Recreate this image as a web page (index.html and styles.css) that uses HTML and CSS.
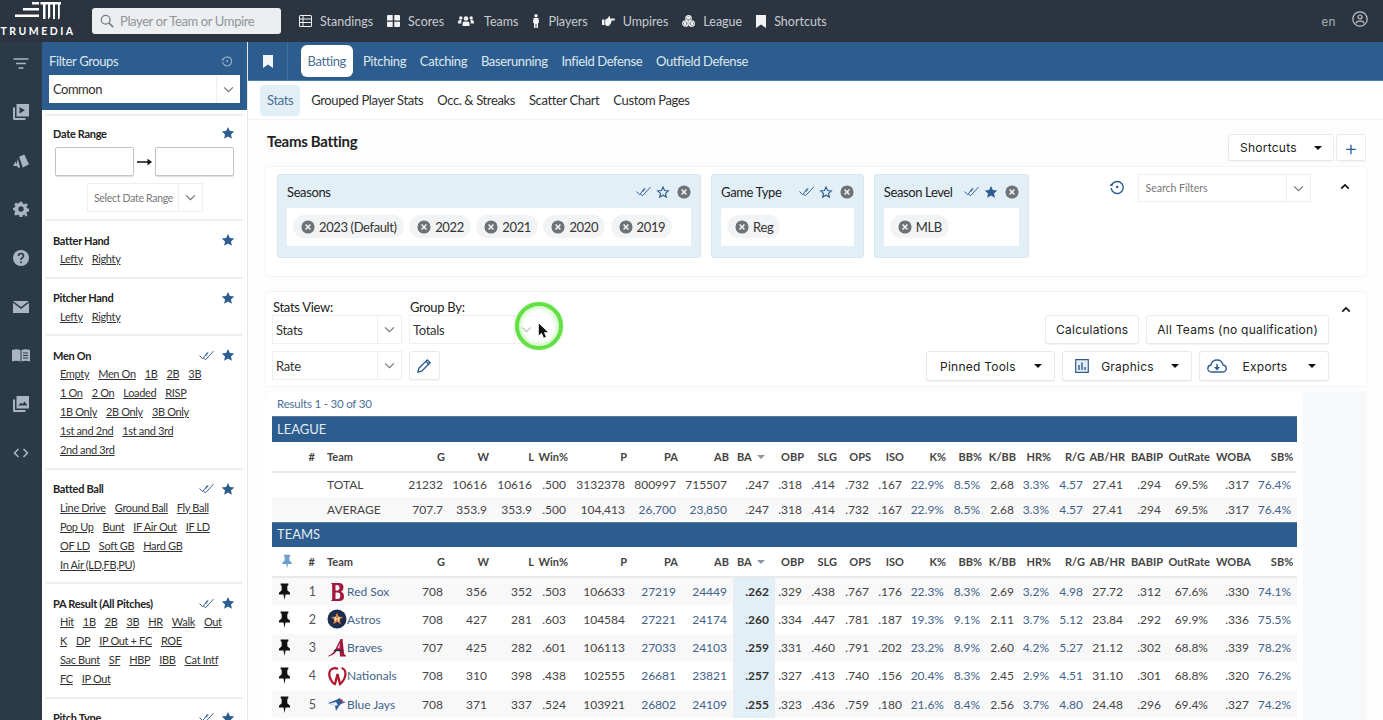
FILE: index.html
```html
<!DOCTYPE html>
<html lang="en">
<head>
<meta charset="utf-8">
<title>Teams Batting</title>
<link rel="stylesheet" href="styles.css">
</head>
<body>
<svg class="sprite" width="0" height="0" aria-hidden="true">
  <symbol id="i-chev" viewBox="0 0 12 8"><path d="M1 1.500 6 6.500 11 1.500" fill="none" stroke="currentColor" stroke-width="1.400"/></symbol>
  <symbol id="i-star" viewBox="0 0 24 24"><path d="M12 1.500l3.200 7 7.600.8-5.700 5.100 1.600 7.500L12 18.100l-6.700 3.800 1.600-7.500L1.200 9.300l7.600-.8z" fill="currentColor"/></symbol>
  <symbol id="i-staro" viewBox="0 0 24 24"><path d="M12 3.500l2.700 5.900 6.400.7-4.800 4.300 1.400 6.300L12 17.500l-5.700 3.200 1.400-6.300-4.800-4.300 6.400-.7z" fill="none" stroke="currentColor" stroke-width="2"/></symbol>
  <symbol id="i-x" viewBox="0 0 16 16"><circle cx="8" cy="8" r="7.500" fill="currentColor"/><path d="M5.200 5.200l5.600 5.600M10.800 5.200l-5.600 5.600" stroke="#f2f2f2" stroke-width="1.800"/></symbol>
  <symbol id="i-check" viewBox="0 0 16 11"><path d="M.5 5.500 4 9 9 2M4.500 8 7 10 15.500 .8M7 6 10 2.500" fill="none" stroke="currentColor" stroke-width="1"/></symbol>
  <symbol id="i-hist" viewBox="0 0 16 16"><path d="M3 5.500A6 6 0 1 1 2.200 9" fill="none" stroke="currentColor" stroke-width="1.400"/><path d="M.3 6.500 3.600 7.200 4 3.600z" fill="currentColor"/><circle cx="8.200" cy="8" r="1.300" fill="currentColor"/></symbol>
  <symbol id="i-caretup" viewBox="0 0 12 8"><path d="M1.500 6.500 6 2l4.500 4.500" fill="none" stroke="currentColor" stroke-width="2"/></symbol>
  <symbol id="i-pin" viewBox="0 0 14 20"><path d="M2.500 .5h9v2L10.300 3.500v5l3.200 3V13.500H8.200L7 20l-1.200-6.500H.5v-2l3.200-3v-5L2.500 2.500z" fill="currentColor"/></symbol>
</svg>

<div class="app">
  <header class="top">
    <div class="logo">
      <svg class="logo-mark" viewBox="0 0 46 18" aria-hidden="true">
        <path d="M17 0h7v2.500h-7zM8 6h16v2.500H8zM0 12.500h24V15H0z" fill="#fff"/>
        <path d="M25.500 0H46v2.500H44.800V15.500Q44.800 17 43 17.500V2.500H40V17h-2V2.500h-2.800V15L33 17.500V2.500H30.500V17H28V2.500H25.500z" fill="#fff"/>
      </svg>
      <span class="logo-text">TRUMEDIA</span>
    </div>
    <div class="search">
      <svg class="search-ic" viewBox="0 0 16 16"><circle cx="6.500" cy="6.500" r="5" fill="none" stroke="currentColor" stroke-width="1.500"/><path d="M10.200 10.200 15 15" stroke="currentColor" stroke-width="1.800"/></svg>
      <span>Player or Team or Umpire</span>
    </div>
    <nav class="nav">
      <a class="nav-item"><svg class="ni" viewBox="0 0 13 12"><path fill="currentColor" d="M0 1.500Q0 0 1.500 0h10Q13 0 13 1.500v9q0 1.500-1.500 1.500h-10Q0 12 0 10.500zM1 1v2.500h2.500V1zm3.500 0v2.500H12V1zM1 4.500V7h2.500V4.500zm3.500 0V7H12V4.500zM1 8v3h2.500V8zm3.500 0v3H12V8z"/></svg>Standings</a>
      <a class="nav-item"><svg class="ni" viewBox="0 0 13 12"><path fill="currentColor" d="M0 1Q0 0 1 0h4.700v5.500H0zM7.300 0H12q1 0 1 1v4.500H7.300zM0 6.800h5.700V12H1q-1 0-1-1zM7.300 6.800H13V11q0 1-1 1H7.300z"/></svg>Scores</a>
      <a class="nav-item"><svg class="ni ni-w" viewBox="0 0 16 12"><g fill="currentColor"><circle cx="8" cy="3.500" r="2.300"/><path d="M4.500 11V8.500Q4.500 6.500 6.500 6.500h3q2 0 2 2V11z"/><circle cx="2.800" cy="3" r="1.700"/><path d="M0 8.500V7q0-2 2-2h1.500Q3.300 6 3.300 8.500z"/><circle cx="13.200" cy="3" r="1.700"/><path d="M16 8.500V7q0-2-2-2h-1.500q.2 1 .2 3.500z"/></g></svg>Teams</a>
      <a class="nav-item"><svg class="ni ni-n" viewBox="0 0 6 14"><g fill="currentColor"><circle cx="3" cy="1.700" r="1.700"/><path d="M.5 4h5L6 9H5v5H3.400V10h-.8v4H1V9H0z"/></g></svg>Players</a>
      <a class="nav-item"><svg class="ni" viewBox="0 0 13 10"><path fill="currentColor" d="M0 3.500h2.500V9H0zM3.200 3.800 6 2 7 0q1.500.3 1 2.500h4Q13 2.500 13 3.500T12 4.500H9.500q.5 1.500-.5 2 .3 1.500-1 2Q7.500 10 6 10H5L3.200 9z"/></svg>Umpires</a>
      <a class="nav-item"><svg class="ni" viewBox="0 0 13 12"><g fill="none" stroke="currentColor" stroke-width="1.300"><circle cx="6.500" cy="3.400" r="2.700"/><circle cx="3.400" cy="8.500" r="2.700"/><circle cx="9.600" cy="8.500" r="2.700"/></g><path fill="currentColor" d="M5 1.500h3v3H5zM2 7h2.500v3H2zM8.500 7H11v3H8.500z"/></svg>League</a>
      <a class="nav-item"><svg class="ni ni-b" viewBox="0 0 10 13"><path fill="currentColor" d="M0 0h10v13L5 9.500 0 13z"/></svg>Shortcuts</a>
    </nav>
    <div class="top-right">
      <span class="lang">en</span>
      <svg class="user" viewBox="0 0 16 16"><g fill="none" stroke="currentColor" stroke-width="1.200"><circle cx="8" cy="8" r="7.200"/><circle cx="8" cy="6" r="2"/><path d="M3.800 12.500Q4.500 10.200 6.500 10.200h3q2 0 2.700 2.300"/></g></svg>
    </div>
  </header>

  <div class="body">
    <aside class="rail">
      <svg class="ri" viewBox="0 0 16 12"><path d="M.5 1h15M3 5.500h10M5.500 10h5" stroke="currentColor" stroke-width="1.700" fill="none"/></svg>
      <svg class="ri" viewBox="0 0 16 16"><path fill="currentColor" d="M3.500 0H16v12.500H3.500zM6.500 3v6.500L12 6.200zM0 3.500h2V14h10.500v2H1.500Q0 16 0 14.500z" fill-rule="evenodd"/></svg>
      <svg class="ri" viewBox="0 0 17 15"><path fill="currentColor" d="M6.500 3 12 .5 17 11l-6.500 3.500zM5 5.500 7.500 14 6 15 3.500 12zM3 8l1 5-4-.5z"/></svg>
      <svg class="ri" viewBox="0 0 24 24"><path fill="currentColor" fill-rule="evenodd" d="M10 1h4l.6 3 2.400 1 2.600-1.700 2.800 2.800L20 8.700l1 2.300 3 .6v4l-3 .4-1 2.500 1.700 2.500-2.800 2.800L17 20.400l-2.400 1L14 24h-4l-.6-2.700-2.400-1L4.400 22 1.600 19.200 3.400 16.600l-1-2.500L0 13.500v-3l2.600-.6 1-2.300L1.900 5.100l2.800-2.800L7 4l2.400-1zM12 8a4 4 0 1 0 0 8 4 4 0 0 0 0-8z"/></svg>
      <svg class="ri" viewBox="0 0 16 16"><circle cx="8" cy="8" r="8" fill="currentColor"/><path d="M5.500 6Q5.500 3.500 8 3.500T10.500 6Q10.500 7.300 9 8 8 8.500 8 10" fill="none" stroke="#2b3a48" stroke-width="1.600"/><circle cx="8" cy="12.200" r="1" fill="#2b3a48"/></svg>
      <svg class="ri" viewBox="0 0 16 12"><path fill="currentColor" d="M0 0h16L8 6zM0 1.800 8 8l8-6.200V12H0z"/></svg>
      <svg class="ri ri-wide" viewBox="0 0 18 13"><path fill="currentColor" fill-rule="evenodd" d="M0 1.500Q4 0 8.500 1.500V13Q4 11.500 0 13zM9.500 1.500Q14 0 18 1.500V13Q14 11.500 9.500 13zM11 4v1h5V4zm0 2.500v1h5v-1zm0 2.500v1h5V9z"/></svg>
      <svg class="ri" viewBox="0 0 16 16"><path fill="currentColor" fill-rule="evenodd" d="M3.500 0H16v12.500H3.500zM5 9.500h9.500L11.500 5.500 9.500 8 8 6.800zM0 3.500h2V14h10.500v2H1.500Q0 16 0 14.500z"/></svg>
      <svg class="ri" viewBox="0 0 16 10"><path d="M5.500 1 1.500 5l4 4M10.500 1l4 4-4 4" fill="none" stroke="currentColor" stroke-width="1.600"/></svg>
    </aside>

    <aside class="filters">
      <div class="fg">
        <div class="fg-head"><span>Filter Groups</span><svg class="fg-hist"><use href="#i-hist"/></svg></div>
        <div class="sel sel-fg"><span class="sel-t">Common</span><span class="sel-c"><svg class="chev"><use href="#i-chev"/></svg></span></div>
      </div>
      <div class="flist">
        <section class="fs fs-date">
          <div class="fs-h"><b>Date Range</b><svg class="star"><use href="#i-star"/></svg></div>
          <div class="dates"><span class="date"></span><svg class="arrow" viewBox="0 0 15 8"><path d="M0 4h12" stroke="#111" stroke-width="1.500"/><path d="M10.500 0.800 15 4l-4.500 3.200z" fill="#111"/></svg><span class="date"></span></div>
          <div class="sel sel-date"><span class="sel-t">Select Date Range</span><span class="sel-c"><svg class="chev"><use href="#i-chev"/></svg></span></div>
        </section>
        <section class="fs">
          <div class="fs-h"><b>Batter Hand</b><svg class="star"><use href="#i-star"/></svg></div>
          <div class="links"><a>Lefty</a><a>Righty</a></div>
        </section>
        <section class="fs">
          <div class="fs-h"><b>Pitcher Hand</b><svg class="star"><use href="#i-star"/></svg></div>
          <div class="links"><a>Lefty</a><a>Righty</a></div>
        </section>
        <section class="fs">
          <div class="fs-h"><b>Men On</b><svg class="dbl"><use href="#i-check"/></svg><svg class="star"><use href="#i-star"/></svg></div>
          <div class="links"><a>Empty</a><a>Men On</a><a>1B</a><a>2B</a><a>3B</a><br><a>1 On</a><a>2 On</a><a>Loaded</a><a>RISP</a><br><a>1B Only</a><a>2B Only</a><a>3B Only</a><br><a>1st and 2nd</a><a>1st and 3rd</a><br><a>2nd and 3rd</a></div>
        </section>
        <section class="fs">
          <div class="fs-h"><b>Batted Ball</b><svg class="dbl"><use href="#i-check"/></svg><svg class="star"><use href="#i-star"/></svg></div>
          <div class="links"><a>Line Drive</a><a>Ground Ball</a><a>Fly Ball</a><br><a>Pop Up</a><a>Bunt</a><a>IF Air Out</a><a>IF LD</a><br><a>OF LD</a><a>Soft GB</a><a>Hard GB</a><br><a>In Air (LD,FB,PU)</a></div>
        </section>
        <section class="fs">
          <div class="fs-h"><b>PA Result (All Pitches)</b><svg class="dbl"><use href="#i-check"/></svg><svg class="star"><use href="#i-star"/></svg></div>
          <div class="links"><a>Hit</a><a>1B</a><a>2B</a><a>3B</a><a>HR</a><a>Walk</a><a>Out</a><br><a>K</a><a>DP</a><a>IP Out + FC</a><a>ROE</a><br><a>Sac Bunt</a><a>SF</a><a>HBP</a><a>IBB</a><a>Cat Intf</a><br><a>FC</a><a>IP Out</a></div>
        </section>
        <section class="fs">
          <div class="fs-h"><b>Pitch Type</b><svg class="dbl"><use href="#i-check"/></svg><svg class="star"><use href="#i-star"/></svg></div>
        </section>
      </div>
    </aside>

    <main class="main">
      <div class="tabs">
        <span class="tab-mark"><svg viewBox="0 0 10 13"><path fill="currentColor" d="M0 0h10v13L5 9.500 0 13z"/></svg></span>
        <a class="tab tab-on">Batting</a><a class="tab">Pitching</a><a class="tab">Catching</a><a class="tab">Baserunning</a><a class="tab">Infield Defense</a><a class="tab">Outfield Defense</a>
      </div>
      <div class="subtabs">
        <a class="sub sub-on">Stats</a><a class="sub">Grouped Player Stats</a><a class="sub">Occ. &amp; Streaks</a><a class="sub">Scatter Chart</a><a class="sub">Custom Pages</a>
      </div>
      <div class="content">
        <div class="title-row">
          <h1>Teams Batting</h1>
          <div class="sc-group">
            <button class="btn btn-sc">Shortcuts<i class="caret"></i></button>
            <button class="btn btn-plus">+</button>
          </div>
        </div>

        <div class="panel panel-f">
          <div class="fcard fcard-s">
            <div class="fcard-h"><span>Seasons</span><svg class="dbl"><use href="#i-check"/></svg><svg class="staro"><use href="#i-staro"/></svg><svg class="xc"><use href="#i-x"/></svg></div>
            <div class="fcard-b">
              <span class="chip"><svg class="xc"><use href="#i-x"/></svg>2023 (Default)</span>
              <span class="chip"><svg class="xc"><use href="#i-x"/></svg>2022</span>
              <span class="chip"><svg class="xc"><use href="#i-x"/></svg>2021</span>
              <span class="chip"><svg class="xc"><use href="#i-x"/></svg>2020</span>
              <span class="chip"><svg class="xc"><use href="#i-x"/></svg>2019</span>
            </div>
          </div>
          <div class="fcard fcard-g">
            <div class="fcard-h"><span>Game Type</span><svg class="dbl"><use href="#i-check"/></svg><svg class="staro"><use href="#i-staro"/></svg><svg class="xc"><use href="#i-x"/></svg></div>
            <div class="fcard-b"><span class="chip"><svg class="xc"><use href="#i-x"/></svg>Reg</span></div>
          </div>
          <div class="fcard fcard-l">
            <div class="fcard-h"><span>Season Level</span><svg class="dbl"><use href="#i-check"/></svg><svg class="staro"><use href="#i-star"/></svg><svg class="xc"><use href="#i-x"/></svg></div>
            <div class="fcard-b"><span class="chip"><svg class="xc"><use href="#i-x"/></svg>MLB</span></div>
          </div>
          <svg class="hist"><use href="#i-hist"/></svg>
          <div class="sel sel-search"><span class="sel-t">Search Filters</span><span class="sel-c"><svg class="chev"><use href="#i-chev"/></svg></span></div>
          <span class="caret-col caret-col-f"><svg class="cup"><use href="#i-caretup"/></svg></span>
        </div>

        <div class="panel panel-s">
          <div class="views">
            <div class="view-col">
              <label>Stats View:</label>
              <div class="sel sel-v"><span class="sel-t">Stats</span><span class="sel-c"><svg class="chev"><use href="#i-chev"/></svg></span></div>
              <div class="sel sel-v"><span class="sel-t">Rate</span><span class="sel-c"><svg class="chev"><use href="#i-chev"/></svg></span></div>
            </div>
            <div class="view-col">
              <label>Group By:</label>
              <div class="sel sel-v"><span class="sel-t">Totals</span><span class="sel-c"><svg class="chev"><use href="#i-chev"/></svg></span></div>
              <button class="btn btn-pen"><svg viewBox="0 0 16 16"><path d="M2 11 11 2l3 3-9 9-4 1z" fill="none" stroke="#2c5d8e" stroke-width="1.500"/><path d="M9.500 3.500l3 3" stroke="#2c5d8e" stroke-width="1.500"/></svg></button>
            </div>
            <div class="spot"><svg class="cursor" viewBox="0 0 12 18"><path d="M1 0v14l3.500-3 2.500 6 2.500-1-2.500-5.500H12z" fill="#111"/></svg></div>
          </div>
          <div class="tools">
            <div class="tool-row">
              <button class="btn">Calculations</button>
              <button class="btn">All Teams (no qualification)</button>
            </div>
            <div class="tool-row">
              <button class="btn btn-t btn-pin">Pinned Tools<i class="caret"></i></button>
              <button class="btn btn-t"><svg class="ti" viewBox="0 0 14 14"><path d="M.7.700h12.600v12.600H.7z" fill="#e6eef5" stroke="#2c5d8e" stroke-width="1.200"/><path d="M4 6v5M7 3.500V11M10 8v3" stroke="#2c5d8e" stroke-width="1.400"/></svg>Graphics<i class="caret"></i></button>
              <button class="btn btn-t"><svg class="ti ti-c" viewBox="0 0 20 14"><path d="M5 13Q.8 13 .8 9.500 .8 6.500 4 6 5 1 10 1t6 5q3.300.5 3.300 3.500 0 3.500-4.300 3.500z" fill="none" stroke="#2c5d8e" stroke-width="1.300"/><path d="M10 5v4.500" stroke="#2c5d8e" stroke-width="1.500"/><path d="M7 8h6l-3 3.500z" fill="#2c5d8e"/></svg>Exports<i class="caret"></i></button>
            </div>
          </div>
          <span class="caret-col caret-col-s"><svg class="cup"><use href="#i-caretup"/></svg></span>
        </div>

        <div class="results-wrap">
          <div class="results">
            <div class="res-count">Results 1 - 30 of 30</div>
            <table class="grid">
              <colgroup><col class="c25"><col class="c22"><col class="c86"><col class="c44"><col class="c44"><col class="c45"><col class="c34"><col class="c59"><col class="c51"><col class="c51"><col class="c42"><col class="c33"><col class="c33"><col class="c34"><col class="c33"><col class="c42"><col class="c36"><col class="c34"><col class="c35"><col class="c34"><col class="c40"><col class="c38"><col class="c47"><col class="c41"><col class="c42"></colgroup>
              <tbody>
                <tr class="band"><td colspan="25">LEAGUE</td></tr>
                <tr class="hd"><th></th><th>#</th><th class="l">Team</th><th>G</th><th>W</th><th>L</th><th>Win%</th><th>P</th><th>PA</th><th>AB</th><th class="ba">BA<i class="sort"></i></th><th>OBP</th><th>SLG</th><th>OPS</th><th>ISO</th><th>K%</th><th>BB%</th><th>K/BB</th><th>HR%</th><th>R/G</th><th>AB/HR</th><th>BABIP</th><th>OutRate</th><th>WOBA</th><th>SB%</th></tr>
                <tr class="lg"><td></td><td></td><td class="l">TOTAL</td><td>21232</td><td>10616</td><td>10616</td><td>.500</td><td>3132378</td><td>800997</td><td>715507</td><td>.247</td><td>.318</td><td>.414</td><td>.732</td><td>.167</td><td class="u">22.9%</td><td class="u">8.5%</td><td>2.68</td><td class="u">3.3%</td><td class="u">4.57</td><td>27.41</td><td>.294</td><td>69.5%</td><td>.317</td><td class="u">76.4%</td></tr>
                <tr class="lg alt"><td></td><td></td><td class="l">AVERAGE</td><td>707.7</td><td>353.9</td><td>353.9</td><td>.500</td><td>104,413</td><td class="u">26,700</td><td class="u">23,850</td><td>.247</td><td>.318</td><td>.414</td><td>.732</td><td>.167</td><td class="u">22.9%</td><td class="u">8.5%</td><td>2.68</td><td class="u">3.3%</td><td class="u">4.57</td><td>27.41</td><td>.294</td><td>69.5%</td><td>.317</td><td class="u">76.4%</td></tr>
                <tr class="band"><td colspan="25">TEAMS</td></tr>
                <tr class="hd hd-t"><th class="pinh"><svg class="pin-h"><use href="#i-pin"/></svg></th><th>#</th><th class="l">Team</th><th>G</th><th>W</th><th>L</th><th>Win%</th><th>P</th><th>PA</th><th>AB</th><th class="ba">BA<i class="sort"></i></th><th>OBP</th><th>SLG</th><th>OPS</th><th>ISO</th><th>K%</th><th>BB%</th><th>K/BB</th><th>HR%</th><th>R/G</th><th>AB/HR</th><th>BABIP</th><th>OutRate</th><th>WOBA</th><th>SB%</th></tr>
                <tr class="tm alt"><td class="pinc"><svg class="pin"><use href="#i-pin"/></svg></td><td class="rk">1</td><td class="l u"><span class="team"><svg class="tl" viewBox="0 0 20 20"><path fill="#a3173f" fill-rule="evenodd" d="M4 1h8q4.500 0 4.500 4.500 0 3-2.500 4.200 3 1 3 4.800 0 4.500-5 4.500H4l1.200-1.500V2.500zM8.500 3v5.500H10q2.500 0 2.500-2.800T10 3zM8.500 10.500V17H10.500q2.800 0 2.800-3.300T10.500 10.500z"/></svg>Red Sox</span></td><td>708</td><td>356</td><td>352</td><td>.503</td><td>106633</td><td class="u">27219</td><td class="u">24449</td><td class="hl">.262</td><td>.329</td><td>.438</td><td>.767</td><td>.176</td><td class="u">22.3%</td><td class="u">8.3%</td><td>2.69</td><td class="u">3.2%</td><td class="u">4.98</td><td>27.72</td><td>.312</td><td>67.6%</td><td>.330</td><td class="u">74.1%</td></tr>
                <tr class="tm"><td class="pinc"><svg class="pin"><use href="#i-pin"/></svg></td><td class="rk">2</td><td class="l u"><span class="team"><svg class="tl" viewBox="0 0 20 20"><circle cx="10" cy="10" r="9.500" fill="#1c2d4d"/><path fill="#e9853a" d="M10 3.500l1.600 4.300 4.500.2-3.500 2.800 1.200 4.400L10 12.700l-3.800 2.500 1.200-4.400L3.900 8l4.500-.2z"/><path d="M8.200 7.800v4.400M11.800 7.800v4.400M8.200 10h3.600" stroke="#f0e6d8" stroke-width="1.200"/></svg>Astros</span></td><td>708</td><td>427</td><td>281</td><td>.603</td><td>104584</td><td class="u">27221</td><td class="u">24174</td><td class="hl">.260</td><td>.334</td><td>.447</td><td>.781</td><td>.187</td><td class="u">19.3%</td><td class="u">9.1%</td><td>2.11</td><td class="u">3.7%</td><td class="u">5.12</td><td>23.84</td><td>.292</td><td>69.9%</td><td>.336</td><td class="u">75.5%</td></tr>
                <tr class="tm alt"><td class="pinc"><svg class="pin"><use href="#i-pin"/></svg></td><td class="rk">3</td><td class="l u"><span class="team"><svg class="tl" viewBox="0 0 20 20"><path fill="#a3173f" fill-rule="evenodd" d="M1 18Q6 16 9 10L13.500 1H15.500L17 15Q17.300 17 19 17.500V18.500H13L12.600 12.500H9.800Q7 17.500 1 18.500zM12.800 5 10.600 10.300H12.400z"/><path d="M7 12.500H16" stroke="#1c2d4d" stroke-width="1.300"/></svg>Braves</span></td><td>707</td><td>425</td><td>282</td><td>.601</td><td>106113</td><td class="u">27033</td><td class="u">24103</td><td class="hl">.259</td><td>.331</td><td>.460</td><td>.791</td><td>.202</td><td class="u">23.2%</td><td class="u">8.9%</td><td>2.60</td><td class="u">4.2%</td><td class="u">5.27</td><td>21.12</td><td>.302</td><td>68.8%</td><td>.339</td><td class="u">78.2%</td></tr>
                <tr class="tm"><td class="pinc"><svg class="pin"><use href="#i-pin"/></svg></td><td class="rk">4</td><td class="l u"><span class="team"><svg class="tl" viewBox="0 0 20 20"><path d="M3.500 4Q1 8 3.500 13T8 18L10.500 8 13 18Q18 14 18.500 8 18.500 3 14.500 2M3.500 4Q7 1 11 3" fill="none" stroke="#b01a2c" stroke-width="2.300"/></svg>Nationals</span></td><td>708</td><td>310</td><td>398</td><td>.438</td><td>102555</td><td class="u">26681</td><td class="u">23821</td><td class="hl">.257</td><td>.327</td><td>.413</td><td>.740</td><td>.156</td><td class="u">20.4%</td><td class="u">8.3%</td><td>2.45</td><td class="u">2.9%</td><td class="u">4.51</td><td>31.10</td><td>.301</td><td>68.8%</td><td>.320</td><td class="u">76.2%</td></tr>
                <tr class="tm alt"><td class="pinc"><svg class="pin"><use href="#i-pin"/></svg></td><td class="rk">5</td><td class="l u"><span class="team"><svg class="tl-svg" viewBox="0 0 18 13"><path d="M0 5 8 2l4-2 1 3 5 1-5 2-2 2-3 5-1-5z" fill="#2a5c9c"/><path d="M1.500 5.500 8 4l2 3-3 1z" fill="#e8eef5"/><path d="M12 1l3 1-2 3z" fill="#c8202f"/></svg>Blue Jays</span></td><td>708</td><td>371</td><td>337</td><td>.524</td><td>103921</td><td class="u">26802</td><td class="u">24109</td><td class="hl">.255</td><td>.323</td><td>.436</td><td>.759</td><td>.180</td><td class="u">21.6%</td><td class="u">8.4%</td><td>2.56</td><td class="u">3.7%</td><td class="u">4.80</td><td>24.48</td><td>.296</td><td>69.4%</td><td>.327</td><td class="u">74.2%</td></tr>
              </tbody>
            </table>
          </div>
        </div>
      </div>
    </main>
  </div>
</div>
</body>
</html>
```

FILE: styles.css
```css
* { box-sizing: border-box; }
html, body { margin: 0; padding: 0; }
body { width: 1383px; height: 720px; overflow: hidden; background: #fff; font-family: Lato, "Liberation Sans", sans-serif; color: #333; }
.sprite { position: absolute; }
svg { display: block; flex: none; }
button { font: inherit; }
.app { width: 1383px; height: 720px; display: flex; flex-direction: column; overflow: hidden; }

/* top bar */
.top { height: 42px; flex: none; background: #2c3440; display: flex; align-items: center; color: #c6ccd2; }
.logo { width: 92px; flex: none; height: 42px; display: flex; flex-direction: column; align-items: center; }
.logo-mark { width: 46px; height: 18px; margin-top: 2px; margin-left: -17px; }
.logo-text { color: #fff; font-size: 10.500px; font-weight: 700; letter-spacing: 2.500px; line-height: 12px; margin-top: 5px; margin-left: -16px; white-space: nowrap; }
.search { width: 189px; height: 26px; background: #eceef0; border-radius: 3px; display: flex; align-items: center; color: #8f959b; font-size: 13px; letter-spacing: -.38px; padding-left: 8px; gap: 6px; }
.search-ic { width: 14px; height: 14px; color: #777d84; }
.nav { display: flex; align-items: center; gap: 14px; margin-left: 18px; }
.nav-item { display: flex; align-items: center; gap: 8px; font-size: 12.500px; color: #c6ccd2; white-space: nowrap; }
.ni { width: 13px; height: 12px; color: #f0f2f4; }
.ni-w { width: 16px; margin-right: 2px; }
.ni-n { width: 6px; height: 14px; margin: 0 1px; }
.ni-b { width: 10px; height: 13px; }
.top-right { margin-left: auto; display: flex; align-items: center; gap: 16px; padding-right: 15px; }
.lang { font-size: 12.500px; letter-spacing: .5px; color: #a6adb4; }
.user { width: 16px; height: 16px; color: #c0c6cc; margin-top: -4px; }

.body { flex: 1; min-height: 0; display: flex; }

/* icon rail */
.rail { width: 42px; flex: none; background: #2b3a48; color: #a9b6c2; display: grid; grid-auto-rows: 48.700px; justify-items: center; align-items: center; align-content: start; }
.rail .ri { width: 16px; height: 16px; margin-top: -6px; }
.rail .ri:first-child { margin-top: -4px; }
.rail .ri-wide { width: 18px; }

/* filter column */
.filters { width: 206px; flex: none; background: #fff; border-right: 1px solid #e6e8ea; overflow: hidden; }
.fg { background: #2c5d8e; height: 68px; padding: 8px 7px 0 7px; }
.fg-head { height: 22px; margin-bottom: 3px; display: flex; align-items: center; justify-content: space-between; color: #dde6ee; font-size: 13px; letter-spacing: -.38px; padding-right: 7px; }
.fg-hist { width: 12px; height: 12px; color: #9db6cc; }
.sel { display: flex; align-items: stretch; background: #fff; border: 1px solid #eeeff1; }
.sel-t { flex: 1; display: flex; align-items: center; min-width: 0; white-space: nowrap; }
.sel-c { width: 24px; flex: none; border-left: 1px solid #eeeff1; display: flex; align-items: center; justify-content: center; color: #777; }
.chev { width: 11px; height: 7px; }
.sel-fg { height: 28px; width: 191px; font-size: 13px; letter-spacing: -.5px; color: #333; border: 0; }
.sel-fg .sel-t { padding-left: 4px; }
.flist { padding: 4px 4px 0 4px; }
.fs { border-bottom: 2px solid #eeeff0; padding: 11px 8px 8.500px 7px; }
.fs:first-child { border-top: 2px solid #eeeff0; padding-top: 9px; padding-bottom: 7px; }
.fs-h { height: 16px; margin-bottom: 1px; display: flex; align-items: center; font-size: 11px; letter-spacing: -.3px; color: #222; }
.fs-h b { margin-right: auto; font-weight: 700; white-space: nowrap; }
.star { width: 14px; height: 14px; color: #2c5d8e; }
.dbl { width: 15px; height: 11px; color: #2c5d8e; margin-right: 7px; }
.dates { display: flex; align-items: center; height: 29px; margin: 6px 0 7px 2px; }
.date { width: 79px; height: 29px; border: 1px solid #c4c4c4; border-radius: 2px; box-shadow: 0 1px 1px #ddd; background: #fff; }
.arrow { width: 15px; height: 8px; margin: 0 3px; }
.sel-date { width: 116px; height: 29px; margin-left: 34px; font-size: 10.500px; letter-spacing: -.3px; color: #777; }
.sel-date .sel-t { padding-left: 6px; }
.links { padding-left: 7px; font-size: 11px; letter-spacing: -.35px; line-height: 19px; color: #333; white-space: nowrap; }
.links a { text-decoration: underline; margin-right: 9px; }

/* main */
.main { flex: 1; min-width: 0; display: flex; flex-direction: column; background: #fdfdfe; }
.tabs { height: 39px; flex: none; background: #2c5d8e; border-bottom: 1px solid #4a80ad; display: flex; align-items: center; gap: 13.800px; color: #dfe8f0; font-size: 13px; letter-spacing: -.38px; }
.tab-mark { width: 40px; height: 38px; border-right: 1px solid #3f6f9c; display: flex; align-items: center; justify-content: center; color: #f2f5f8; margin-right: -1.300px; }
.tab-mark svg { width: 10px; height: 13px; }
.tab { white-space: nowrap; }
.tab-on { background: #fff; color: #4a6f94; padding: 0 7px; height: 32px; line-height: 32px; border-radius: 6px; margin-right: -3.800px; }
.subtabs { height: 39px; flex: none; display: flex; align-items: center; gap: 14px; padding-left: 12px; font-size: 13px; letter-spacing: -.38px; color: #2f2f2f; background: #fff; border-bottom: 1px solid #f1f2f4; }
.sub { white-space: nowrap; }
.sub-on { background: #e3eff7; color: #4a6f94; height: 31px; line-height: 31px; padding: 0 7px; border-radius: 4px; margin-right: -3px; }
.content { flex: 1; min-height: 0; padding: 0 16px 0 17px; }
.title-row { height: 46px; display: flex; align-items: flex-start; justify-content: space-between; }
h1 { font-size: 15px; font-weight: 700; letter-spacing: -.3px; color: #222; margin: 12px 0 0 2px; line-height: 18px; }
.sc-group { display: flex; gap: 2px; margin-top: 14px; margin-right: 1px; }
.btn { height: 29px; background: #fff; border: 1px solid #e7e9eb; border-radius: 3px; color: #222; font-family: Inter, Roboto, sans-serif; font-size: 12px; letter-spacing: .24px; display: inline-flex; align-items: center; justify-content: center; padding: 0 10px; white-space: nowrap; box-shadow: 0 1px 1px #f1f2f3; }
.btn-sc { width: 106px; height: 27px; justify-content: space-between; padding: 0 11px; }
.btn-plus { width: 30px; height: 27px; color: #2c5d8e; font-size: 21px; font-weight: 300; padding: 0; }
.caret { display: block; width: 0; height: 0; border: 4px solid transparent; border-top: 4px solid #111; border-bottom: 0; flex: none; }
.panel { background: #fff; border: 1px solid #f3f4f6; border-radius: 3px; display: flex; }
.panel-f { height: 111px; padding: 7px 0 0 11px; align-items: flex-start; }
.fcard { height: 84px; background: #e2eff7; border: 1px solid #d8e6f0; border-radius: 3px; margin-right: 10px; padding: 0 9px; }
.fcard-s { width: 425px; }
.fcard-g { width: 153px; }
.fcard-l { width: 156px; margin-right: 0; }
.fcard-h { height: 33px; display: flex; align-items: center; font-size: 13px; letter-spacing: -.38px; color: #222; white-space: nowrap; }
.fcard-h span { margin-right: auto; }
.fcard-h .dbl { margin-right: 5px; }
.staro { width: 14px; height: 14px; color: #2c5d8e; margin-right: 7px; }
.xc { width: 14px; height: 14px; color: #6d7276; }
.fcard-b { height: 38px; background: #fff; padding: 7px 6px; display: flex; gap: 5.500px; }
.chip { height: 23px; background: #f2f3f4; border-radius: 12px; padding: 0 7px 0 8px; display: flex; align-items: center; gap: 4px; font-size: 13px; letter-spacing: -.38px; color: #333; white-space: nowrap; }
.hist { width: 16px; height: 16px; color: #2c5d8e; margin: 5px 0 0 80px; }
.sel-search { width: 173px; height: 28px; margin-left: 13px; font-size: 10.500px; color: #777; }
.sel-search .sel-t { padding-left: 6px; }
.caret-col { display: flex; justify-content: center; color: #111; }
.caret-col-f { width: 55px; padding: 9px 0 0 13px; }
.caret-col-s { width: 37px; padding: 7px 3px 0 0; }
.cup { width: 10px; height: 7px; }
.panel-s { height: 96px; margin-top: 14px; padding: 7px 0 0 6px; }
.views { display: flex; gap: 7px; position: relative; flex: 1; }
.view-col { width: 130px; display: flex; flex-direction: column; }
.view-col label { height: 16px; line-height: 17px; padding-left: 1px; font-size: 13px; letter-spacing: -.3px; color: #222; }
.sel-v { height: 29px; font-size: 13px; letter-spacing: -.3px; color: #333; }
.sel-v .sel-t { padding-left: 3px; }
.sel-v + .sel-v, .btn-pen { margin-top: 7px; }
.btn-pen { width: 31px; padding: 0; }
.btn-pen svg { width: 15px; height: 15px; }
.spot { position: absolute; left: 243px; top: 3px; width: 48px; height: 48px; border-radius: 50%; border: 4px solid #62e043; background: rgba(255,255,255,.55); box-shadow: inset 0 0 5px 1px #b5f2a3, 0 0 2px #a6f08f; }
.cursor { position: absolute; left: 19px; top: 17px; width: 10px; height: 16px; }
.tools { display: flex; flex-direction: column; align-items: flex-end; gap: 7px; padding-top: 16px; }
.tool-row { display: flex; gap: 7px; }
.btn-t { width: 130px; height: 30px; justify-content: space-between; padding: 0 12px; }
.btn-t svg + .caret, .btn-t .ti ~ .caret { margin-left: 5px; }
.btn-pin { width: 129px; padding: 0 12px 0 13px; }
.ti { width: 14px; height: 14px; }
.ti-c { width: 20px; height: 14px; margin-left: -5px; }
.results-wrap { margin-top: 5px; background: #f6f8fa; height: 328px; }
.results { width: 1038px; height: 328px; background: #fff; border-radius: 4px 4px 0 0; padding: 0 6px 0 7px; }
.res-count { height: 24px; line-height: 24px; font-size: 11.500px; letter-spacing: -.2px; color: #4a6f94; padding-left: 5px; }

/* table */
.grid { table-layout: fixed; border-collapse: collapse; width: 1025px; font-size: 12px; color: #444; }
.c22 { width: 22px; } .c25 { width: 25px; } .c33 { width: 33px; } .c34 { width: 34px; } .c35 { width: 35px; } .c36 { width: 36px; }
.c38 { width: 38px; } .c40 { width: 40px; } .c41 { width: 41px; } .c42 { width: 42px; } .c44 { width: 44px; } .c45 { width: 45px; }
.c47 { width: 47px; } .c51 { width: 51px; } .c59 { width: 59px; } .c86 { width: 86px; }
.grid td, .grid th { padding: 0 6px 0 0; text-align: right; white-space: nowrap; overflow: visible; }
.grid .l { text-align: left; padding-left: 8px; padding-right: 0; }
.band td { height: 25.500px; background: #2c5d8e; color: #e3ebf2; text-align: left; font-size: 13px; padding-left: 5px; box-shadow: inset 0 1px 0 #5a7d9e; }
.hd th { height: 30px; font-size: 11px; font-weight: 700; color: #444; padding-right: 4px; border-bottom: 2px solid #e8e9ea; }
.grid th.ba { text-align: left; padding: 0 0 0 4px; }
.sort { display: inline-block; width: 0; height: 0; border: 4.500px solid transparent; border-top: 4.500px solid #8b95a0; border-bottom: 0; margin-left: 5px; vertical-align: 2px; }
.grid .pinh { text-align: left; padding: 0; }
.pin-h { width: 10px; height: 15px; color: #6f9fc8; margin-left: 10px; }
.pin { width: 13px; height: 17px; color: #111; }
.lg td { height: 25px; }
.tm td { height: 28.250px; }
.alt td { background: #f8f8f9; }
.grid td.u { color: #3f6389; }
.grid td.hl { background: #e2eff7; font-weight: 700; color: #333; }
.pinc svg { margin-left: 6px; }
.grid .rk { color: #555; padding-right: 3px; font-size: 12.500px; }
.team { display: flex; align-items: center; }
.tl { width: 20px; height: 20px; }
.tl-svg { width: 18px; height: 13px; margin: 0 1px 0 1px; }
```
